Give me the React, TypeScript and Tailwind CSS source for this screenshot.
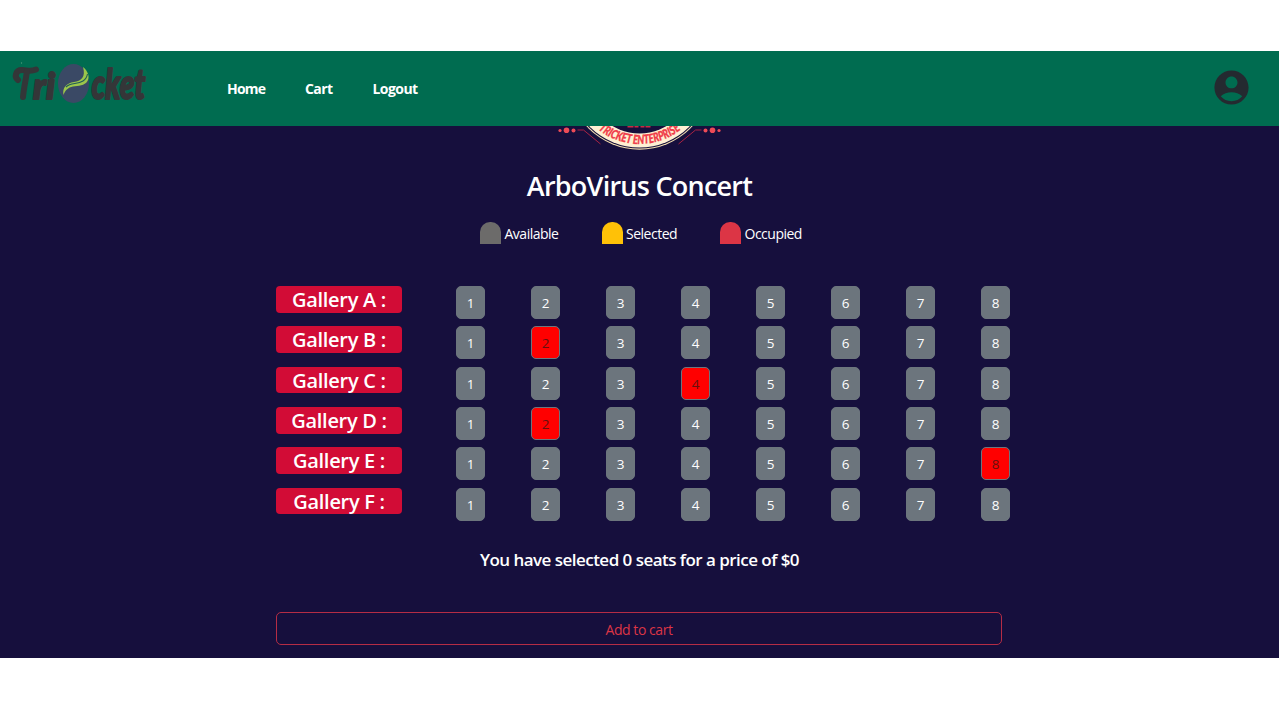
const taken = new Set(["B2", "C4", "D2", "E8"]);
const galleries = ["A", "B", "C", "D", "E", "F"];
const seats = [1, 2, 3, 4, 5, 6, 7, 8];

function Logo() {
  return (
    <svg width="160" height="60" viewBox="0 0 160 60" aria-label="Tricket" className="shrink-0">
      <g fill="#343638" stroke="#343638" strokeWidth="2" strokeLinejoin="round" strokeLinecap="round">
        <g fill="none" strokeWidth="6">
          <path d="M18 29c-4-3-2.500-10 4-10 5 0 8 2 14-.5" />
          <path d="M27 20c-1 8-3 16-4 26" />
        </g>
        <text x="33" y="48" textLength="22" lengthAdjust="spacingAndGlyphs" fontSize="36" fontWeight="900" fontStyle="italic" fontFamily="Lato, sans-serif">ri</text>
        <text x="91.500" y="48" textLength="54" lengthAdjust="spacingAndGlyphs" fontSize="41" fontWeight="900" fontStyle="italic" fontFamily="Lato, sans-serif">cket</text>
      </g>
      <ellipse cx="73.5" cy="32.5" rx="15.5" ry="19.5" fill="#3a4965" />
      <path d="M83 16c5 4 7 10 4.500 14-3 5-9 4.500-14.500 5.500-5 1-8 4-9.500 8.500-1.500-7 3-12 10.500-13 7-1 12-5 9-15Z" fill="#9bc64b" />
      <path d="M66 36c5-5 11-2 17-6 3-2 4-4 4.500-7" fill="none" stroke="#205b59" strokeWidth="1.1" />
      <circle cx="21.5" cy="12" r=".7" fill="#4c9a78" />
    </svg>
  );
}

function Emblem() {
  return (
    <svg width="180" height="30" viewBox="549.500 126 180 30" className="block">
      <circle cx="639" cy="78" r="71.7" fill="#f5dfb2" />
      <circle cx="639" cy="78" r="70.6" fill="#16103c" />
      <circle cx="639" cy="78" r="69.6" fill="#fff0d3" />
      <circle cx="639" cy="81" r="52.5" fill="#16103c" />
      <path id="emblemArc" d="M573 78a66 66 0 0 0 132 0" fill="none" />
      <text fill="#f03a48" stroke="#f03a48" strokeWidth=".35" fontSize="12.5" fontWeight="900" fontStyle="italic" fontFamily="Lato, sans-serif">
        <textPath href="#emblemArc" startOffset="59" textLength="89" lengthAdjust="spacingAndGlyphs">TRICKET ENTERPRISE</textPath>
      </text>
      <path d="M627 126h6v1.500h-6zM634 126h4v1.500h-4zM640 126h4v1.500h-4zM645 126h5v1.500h-5z" fill="#c92a43" />
      <g fill="#ee4b57">
        <circle cx="559.5" cy="130.5" r="1.6" /><circle cx="566" cy="130.2" r="2.8" /><circle cx="573" cy="130.5" r="2" />
        <circle cx="705" cy="130.5" r="2" /><circle cx="712" cy="130.2" r="2.8" /><circle cx="718.500" cy="130.5" r="1.6" />
      </g>
      <path d="M577 130h6l17 14M701 130h-6l-17 14" fill="none" stroke="#a92343" strokeWidth="1" />
    </svg>
  );
}

function Legend({ tone, label, width }: { tone: string; label: string; width: string }) {
  return (
    <div className={`flex h-[22px] items-center gap-[3.500px] ${width}`}>
      <span className={`h-[22px] w-[21px] shrink-0 rounded-t-[10px] ${tone}`} />
      <span className="pt-px text-[14px] leading-[22px] tracking-[-0.5px]">{label}</span>
    </div>
  );
}

export default function App() {
  return (
    <div className="h-[720px] w-[1280px] overflow-hidden bg-white py-[51px] font-['Open_Sans','Noto_Sans',sans-serif] text-white">
      <div className="h-[607px] w-[1279px] overflow-hidden bg-[#160f3d]">
        <header className="flex h-[75px] bg-[#006c50]">
          <Logo />
          <nav className="ml-[67px] flex h-[74px] items-center text-[14px] font-bold tracking-[-0.6px]">
            <a className="w-[78px] tracking-[-0.8px]">Home</a>
            <a className="w-[67.500px]">Cart</a>
            <a className="tracking-[-0.55px]">Logout</a>
          </nav>
          <svg className="mt-[16px] mr-[27px] ml-auto" width="41" height="41" viewBox="0 0 24 24" fill="#242a30">
            <path d="M12 2C6.48 2 2 6.48 2 12s4.48 10 10 10 10-4.48 10-10S17.52 2 12 2zm0 3.5c1.93 0 3.5 1.57 3.5 3.5s-1.57 3.5-3.5 3.5S8.500 10.93 8.500 9 10.070 5.500 12 5.500zm0 14.500c-2.500 0-4.800-1.100-6.300-2.900C7.300 15.500 9.700 14.800 12 14.800s4.700.7 6.300 2.300C16.800 18.900 14.500 20 12 20z" />
          </svg>
        </header>
        <main>
          <div className="flex justify-center"><Emblem /></div>
          <h1 className="mt-[10px] text-center text-[27px] leading-[40px] font-semibold tracking-[-0.75px]">ArboVirus Concert</h1>
          <div className="mt-[16px] ml-[480px] flex">
            <Legend tone="bg-[#6c6b6a]" label="Available" width="w-[121.500px]" />
            <Legend tone="bg-[#ffc107]" label="Selected" width="w-[118.500px]" />
            <Legend tone="bg-[#dc3545]" label="Occupied" width="w-[90px]" />
          </div>
          <div className="mt-[42px] ml-[276px] flex flex-col gap-[7.35px]">
            {galleries.map((g) => (
              <div key={g} className="flex h-[33px]">
                <h2 className="mr-[54px] h-[26.500px] w-[126px] rounded-[4px] bg-[#d20c36] text-center text-[20px] leading-[27px] font-semibold tracking-[-0.3px]">Gallery {g} :</h2>
                <div className="flex gap-[46px]">
                  {seats.map((n) => (
                    <button key={n} className={`h-[33px] w-[29px] rounded-[5px] border border-[#6c757d] pt-px text-[13.500px] ${taken.has(g + n) ? "bg-[#ff0000] text-[#66100f]" : "bg-[#6c757d] text-white"}`}>{n}</button>
                  ))}
                </div>
              </div>
            ))}
          </div>
          <p className="mt-[26px] text-center text-[17px] leading-[26px] font-semibold tracking-[-0.53px]">You have selected 0 seats for a price of $0</p>
          <button className="mt-[39.500px] ml-[276px] block h-[33px] w-[726px] rounded-[5px] border border-[#b52c45] pt-px text-[14px] text-[#dc3545] tracking-[-0.45px]">Add to cart</button>
        </main>
      </div>
    </div>
  );
}
